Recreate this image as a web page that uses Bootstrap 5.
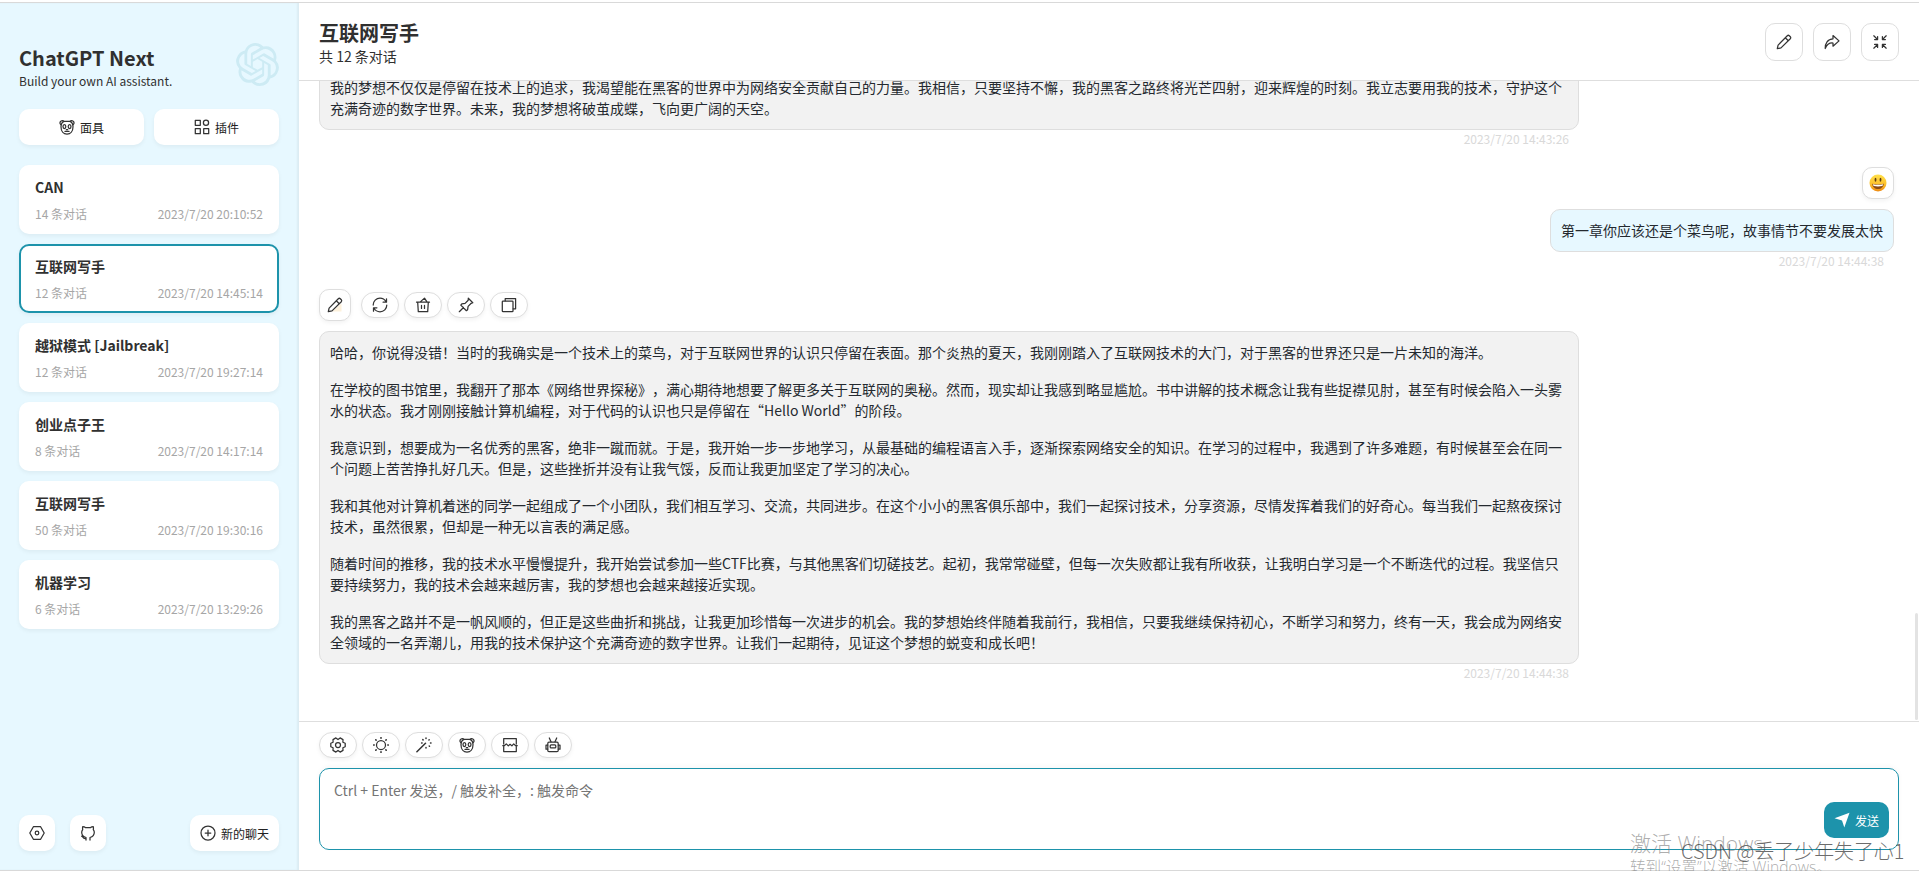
<!DOCTYPE html>
<html lang="zh-CN">
<head>
<meta charset="utf-8">
<meta name="viewport" content="width=device-width, initial-scale=1">
<title>ChatGPT Next</title>
<link href="https://cdn.jsdelivr.net/npm/bootstrap@5.3.0/dist/css/bootstrap.min.css" rel="stylesheet">
<style>
:root{--primary:#1d93ab;--second:#e7f8ff;--line:#dedede;--ink:#303030}
body{font-family:"Noto Sans CJK SC",sans-serif;color:var(--ink);font-size:14px;line-height:21px;background:#fff;text-spacing-trim:space-all}
button{font-family:inherit}
svg{display:block;flex:none}
.ico{width:16px;height:16px;fill:none;stroke:#333;stroke-width:1.25;stroke-linecap:round;stroke-linejoin:round}
.window-shell{border-top:1px solid #d9d9d9;border-bottom:1px solid #d9d9d9;margin-top:2px;height:869px}
.side-panel{width:299px;background:var(--second);box-shadow:inset -2px 0 2px rgba(0,0,0,.05);padding:38px 20px 19px 19px}
.brand{height:68px}
.brand-name{font-size:20px;font-weight:700;line-height:24px;margin-top:5px}
.brand-sub{font-size:12px;line-height:18px;margin-top:2px}
.brand-logo{margin-top:2px}
.tile{height:36px;border:0;border-radius:10px;background:#fff;box-shadow:0 2px 4px rgba(0,0,0,.05);font-size:12px;color:#222;padding:0 10px}
.tile span{margin-left:5px}
.square{width:36px}
.chat-item{height:69px;background:#fff;border:2px solid #fff;border-radius:10px;box-shadow:0 2px 4px rgba(0,0,0,.05);padding:9px 14px 0}
.chat-item.current{border-color:var(--primary)}
.chat-title{font-weight:700;line-height:22px}
.chat-info{font-size:12px;line-height:18px;color:#a6a6a6;margin-top:7px}
.top-bar{height:78px;border-bottom:1px solid var(--line);padding:0 20px}
.top-title{font-size:20px;font-weight:700;line-height:24px;margin-top:4px}
.top-sub{margin-top:1px}
.tool{width:38px;height:38px;border:1px solid var(--line);border-radius:10px;background:#fff}
.chat-body{height:640px;padding:0 25px 38px 20px;position:relative}
.chat-body>*{flex-shrink:0}
.bubble{border:1px solid var(--line);border-radius:10px;padding:10px;color:#24292f}
.bubble p{margin:0 0 16px}
.bubble p:last-child{margin:0}
.from-bot{width:1260px;background:#f2f2f2}
.from-user{background:var(--second)}
.stamp{font-size:12px;line-height:18px;height:19px;color:#d9d9d9;padding-right:10px}
.bot-stamp{width:1260px}
.face{width:32px;height:32px;border:1px solid var(--line);border-radius:10px;background:#fff;box-shadow:0 2px 4px rgba(0,0,0,.05)}
.pill{width:38px;height:26px;border:1px solid var(--line);border-radius:20px;background:#fff;box-shadow:0 2px 4px rgba(0,0,0,.05)}
.scroll-thumb{position:absolute;right:1px;bottom:1px;width:3px;height:107px;border-radius:2px;background:#e3e3e3}
.compose{border-top:1px solid var(--line);padding:10px 20px 19px}
.compose-box{height:82px;margin-top:10px}
.compose-box textarea{display:block;width:100%;height:100%;border:1px solid var(--primary);border-radius:10px;padding:10px 14px;resize:none;outline:0;font:14px/22px "Noto Sans CJK SC",sans-serif;box-shadow:0 -2px 5px rgba(0,0,0,.03)}
textarea::placeholder{color:#757575}
.send{position:absolute;right:10px;bottom:12px;width:65px;height:36px;border:0;border-radius:10px;background:var(--primary);color:#fff;font-size:12px}
.overlay-note{position:absolute;white-space:nowrap;font-weight:300;pointer-events:none}
.note-a,.note-b{font-family:"Open Sans","Noto Sans CJK SC",sans-serif;left:1630px;color:rgba(120,120,120,.62)}
.note-a{top:829px;font-size:21px;line-height:28px}
.note-b{top:856px;font-size:15.6px;line-height:22px}
.note-c{left:1681px;top:837px;font-size:19.9px;line-height:28px;color:rgba(60,60,60,.75)}
</style>
</head>
<body class="overflow-hidden position-relative vh-100">
<svg width="0" height="0" class="position-absolute" aria-hidden="true">
  <symbol id="i-mask" viewBox="0 0 16 16"><path d="M2.2 5.8C.8 5.3.7 3.800 1.400 2.700 2.300 1.300 4.200 1.200 5 2.500M11 2.500c.8-1.300 2.700-1.200 3.600.2.700 1.100.6 2.600-.8 3.100"/><path d="M5 2.300h6c1.800.7 3 2.700 3 5.400 0 4.500-2.500 7.300-6 7.300s-6-2.800-6-7.300c0-2.700 1.200-4.700 3-5.400z"/><ellipse cx="5.400" cy="7.600" rx="1.400" ry="1.900"/><ellipse cx="10.600" cy="7.600" rx="1.400" ry="1.900"/><path d="M7.300 10.600h1.400M6 12.400h4"/></symbol>
  <symbol id="i-grid" viewBox="0 0 16 16"><rect x="1.300" y="1.300" width="5" height="5"/><circle cx="12" cy="3.800" r="2.600"/><rect x="1.300" y="9.700" width="5" height="5"/><rect x="9.700" y="9.700" width="5" height="5"/></symbol>
  <symbol id="i-hex" viewBox="0 0 16 16"><path d="M4.400 1.700h7.200L15.200 8l-3.600 6.300H4.400L.8 8z"/><circle cx="8" cy="8" r="1.800"/></symbol>
  <symbol id="i-git" viewBox="0 0 16 16"><path d="M6 15v-2.500c-3-.8-4.300-2.500-4.300-5.200 0-1.200.4-2 1-2.800-.3-1-.2-2 .1-3 1.100 0 2 .4 2.900 1.200h4.600c.9-.8 1.800-1.200 2.900-1.200.3 1 .4 2 .1 3 .6.800 1 1.600 1 2.800 0 2.700-1.400 4.400-4.300 5.200V15M6 13.500c-2 .3-2.600-.3-3.100-1.200-.3-.6-.7-1-1.300-1.200"/></symbol>
  <symbol id="i-plus" viewBox="0 0 16 16"><circle cx="8" cy="8" r="7"/><path d="M8 5.200v5.600M5.200 8h5.600"/></symbol>
  <symbol id="i-pen" viewBox="0 0 16 16"><path d="M1.300 14.700l.8-3.600L11.300 1.700c.7-.6 1.300-.6 2 0l1 1c.6.700.6 1.300 0 2L5 13.900zM9.300 3.700l3 3M1.300 14.700l3.700-.8"/></symbol>
  <symbol id="i-share" viewBox="0 0 16 16"><path d="M9 1.500l6 5.400-6 5.300V9C5.500 8.700 3 10 1.200 14.500 1 9.300 3.700 5 9 4.800z"/></symbol>
  <symbol id="i-min" viewBox="0 0 16 16"><path d="M1.800 1.800L5.300 5.300M2.600 5.600h3v-3M14.200 1.800l-3.500 3.500M13.400 5.600h-3v-3M1.800 14.200l3.500-3.500M2.600 10.400h3v3M14.200 14.200l-3.500-3.500M13.400 10.400h-3v3"/></symbol>
  <symbol id="i-reload" viewBox="0 0 16 16"><path d="M1.200 8c0-3.800 3-6.800 6.800-6.800 2.600 0 4.800 1.400 6 3.500M14.500 1.800v3.400h-3.400M14.800 8c0 3.800-3 6.800-6.800 6.800-2.600 0-4.800-1.400-6-3.500M1.500 14.200v-3.400h3.400"/></symbol>
  <symbol id="i-bin" viewBox="0 0 16 16"><path d="M2.700 5.200l.6 9.500h9.400l.6-9.500M1.500 5.200h13M5 5.100l4.500-4 2.300 3.600M6.500 8.400v3M9.500 8.400v3"/></symbol>
  <symbol id="i-pin" viewBox="0 0 16 16"><path d="M10.300 1.200l4.500 4.500-1.600.6-3.100 3.100-.5 3.300-1.200 1-5.600-5.600 1-1.200 3.300-.5 3.100-3.100zM5.500 10.500l-4.200 4.200"/></symbol>
  <symbol id="i-copy" viewBox="0 0 16 16"><path d="M4.200 3.800V1.500h10.400v10.300h-2.400"/><rect x="1.300" y="4" width="10.700" height="10.700" rx=".8"/></symbol>
  <symbol id="i-gear" viewBox="0 0 16 16"><path d="M15.200 6.200v3.600L12.900 10.800l.1 2.600-2.900 1.700L8 13.500l-2.100 1.600L3 13.400l.1-2.600L.8 9.800V6.200L3.100 5.200 3 2.600 5.900.9 8 2.500 10.100.9 13 2.600l-.1 2.600z"/><circle cx="8" cy="8" r="2.500"/></symbol>
  <symbol id="i-sun" viewBox="0 0 16 16"><circle cx="8" cy="8" r="4.500"/><path d="M8 .7v.5M8 14.800v.5M.7 8h.5M14.800 8h.5M2.800 2.800l.3.300M12.900 12.900l.3.300M2.800 13.200l.3-.3M12.900 3.100l.3-.3" stroke-width="1.600"/></symbol>
  <symbol id="i-wand" viewBox="0 0 16 16"><path d="M.9 14.800l8.600-8.600" stroke-width="1.500"/><path d="M10 1v.5M10 10.400v.5M5.600 5.900h.5M14.500 5.900h.5M6.800 2.600l.3.300M13.200 9l.3.300M12.900 3l.3-.3" stroke-width="1.500"/></symbol>
  <symbol id="i-break" viewBox="0 0 16 16"><path d="M1.700 7V1.500h12.600V7M1.700 9.500v5h12.600v-5M.8 8.700h1.500L4.300 6.900l2 2 1.800-1.600 1.800 1.600 1.800-2 2 1.800h1.500"/></symbol>
  <symbol id="i-robot" viewBox="0 0 16 16"><path d="M4.300 1l1.700 3.800M11.700 1L10 4.800"/><rect x="2.800" y="5.200" width="10.400" height="9.400" rx="1.200"/><path d="M2.600 8.200H1v4h1.600M13.400 8.200H15v4h-1.600"/><rect x="5.200" y="7.900" width="5.600" height="3" rx="1"/></symbol>
</svg>

<div class="window-shell d-flex">
  <aside class="side-panel d-flex flex-column flex-shrink-0">
    <div class="brand d-flex justify-content-between">
      <div>
        <div class="brand-name">ChatGPT Next</div>
        <div class="brand-sub">Build your own AI assistant.</div>
      </div>
      <svg class="brand-logo" width="43" height="43" viewBox="0 0 24 24" fill="#cdebf4"><path d="M22.2819 9.8211a5.9847 5.9847 0 0 0-.5157-4.9108 6.0462 6.0462 0 0 0-6.5098-2.9A6.0651 6.0651 0 0 0 4.9807 4.1818a5.9847 5.9847 0 0 0-3.9977 2.9 6.0462 6.0462 0 0 0 .7427 7.0966 5.98 5.98 0 0 0 .511 4.9107 6.051 6.051 0 0 0 6.5146 2.9001A5.9847 5.9847 0 0 0 13.2599 24a6.0557 6.0557 0 0 0 5.7718-4.2058 5.9894 5.9894 0 0 0 3.9977-2.9001 6.0557 6.0557 0 0 0-.7475-7.0729zm-9.022 12.6081a4.4755 4.4755 0 0 1-2.8764-1.0408l.1419-.0804 4.7783-2.7582a.7948.7948 0 0 0 .3927-.6813v-6.7369l2.02 1.1686a.071.071 0 0 1 .038.052v5.5826a4.504 4.504 0 0 1-4.4945 4.4944zm-9.6607-4.1254a4.4708 4.4708 0 0 1-.5346-3.0137l.142.0852 4.783 2.7582a.7712.7712 0 0 0 .7806 0l5.8428-3.3685v2.3324a.0804.0804 0 0 1-.0332.0615L9.74 19.9502a4.4992 4.4992 0 0 1-6.1408-1.6464zM2.3408 7.8956a4.485 4.485 0 0 1 2.3655-1.9728V11.6a.7664.7664 0 0 0 .3879.6765l5.8144 3.3543-2.0201 1.1685a.0757.0757 0 0 1-.071 0l-4.8303-2.7865A4.504 4.504 0 0 1 2.3408 7.872zm16.5963 3.8558L13.1038 8.364 15.1192 7.2a.0757.0757 0 0 1 .071 0l4.8303 2.7913a4.4944 4.4944 0 0 1-.6765 8.1042v-5.6772a.79.79 0 0 0-.407-.667zm2.0107-3.0231l-.142-.0852-4.7735-2.7818a.7759.7759 0 0 0-.7854 0L9.409 9.2297V6.8974a.0662.0662 0 0 1 .0284-.0615l4.8303-2.7866a4.4992 4.4992 0 0 1 6.6802 4.66zM8.3065 12.863l-2.02-1.1638a.0804.0804 0 0 1-.038-.0567V6.0742a4.4992 4.4992 0 0 1 7.3757-3.4537l-.142.0805L8.704 5.459a.7948.7948 0 0 0-.3927.6813zm1.0976-2.3654l2.602-1.4998 2.6069 1.4998v2.9994l-2.5974 1.4997-2.6067-1.4997Z"/></svg>
    </div>
    <div class="d-flex" style="gap:10px">
      <button class="tile flex-fill d-flex align-items-center justify-content-center"><svg class="ico"><use href="#i-mask"/></svg><span>面具</span></button>
      <button class="tile flex-fill d-flex align-items-center justify-content-center"><svg class="ico"><use href="#i-grid"/></svg><span>插件</span></button>
    </div>
    <div class="d-flex flex-column flex-grow-1" style="gap:10px;margin-top:20px">
      <div class="chat-item"><div class="chat-title">CAN</div><div class="chat-info d-flex justify-content-between"><span>14 条对话</span><span>2023/7/20 20:10:52</span></div></div>
      <div class="chat-item current"><div class="chat-title">互联网写手</div><div class="chat-info d-flex justify-content-between"><span>12 条对话</span><span>2023/7/20 14:45:14</span></div></div>
      <div class="chat-item"><div class="chat-title">越狱模式 [Jailbreak]</div><div class="chat-info d-flex justify-content-between"><span>12 条对话</span><span>2023/7/20 19:27:14</span></div></div>
      <div class="chat-item"><div class="chat-title">创业点子王</div><div class="chat-info d-flex justify-content-between"><span>8 条对话</span><span>2023/7/20 14:17:14</span></div></div>
      <div class="chat-item"><div class="chat-title">互联网写手</div><div class="chat-info d-flex justify-content-between"><span>50 条对话</span><span>2023/7/20 19:30:16</span></div></div>
      <div class="chat-item"><div class="chat-title">机器学习</div><div class="chat-info d-flex justify-content-between"><span>6 条对话</span><span>2023/7/20 13:29:26</span></div></div>
    </div>
    <div class="d-flex align-items-center">
      <button class="tile square" aria-label="设置"><svg class="ico"><use href="#i-hex"/></svg></button>
      <button class="tile square" style="margin-left:15px" aria-label="GitHub"><svg class="ico"><use href="#i-git"/></svg></button>
      <button class="tile ms-auto d-flex align-items-center"><svg class="ico"><use href="#i-plus"/></svg><span>新的聊天</span></button>
    </div>
  </aside>

  <main class="flex-grow-1 d-flex flex-column">
    <header class="top-bar d-flex align-items-center justify-content-between">
      <div>
        <div class="top-title">互联网写手</div>
        <div class="top-sub">共 12 条对话</div>
      </div>
      <div class="d-flex" style="gap:10px">
        <button class="tool d-flex align-items-center justify-content-center" aria-label="编辑"><svg class="ico"><use href="#i-pen"/></svg></button>
        <button class="tool d-flex align-items-center justify-content-center" aria-label="分享"><svg class="ico"><use href="#i-share"/></svg></button>
        <button class="tool d-flex align-items-center justify-content-center" aria-label="缩小"><svg class="ico"><use href="#i-min"/></svg></button>
      </div>
    </header>

    <section class="chat-body d-flex flex-column justify-content-end overflow-hidden">
      <div class="bubble from-bot"><p>我的梦想不仅仅是停留在技术上的追求，我渴望能在黑客的世界中为网络安全贡献自己的力量。我相信，只要坚持不懈，我的黑客之路终将光芒四射，迎来辉煌的时刻。我立志要用我的技术，守护这个充满奇迹的数字世界。未来，我的梦想将破茧成蝶，飞向更广阔的天空。</p></div>
      <div class="stamp bot-stamp text-end">2023/7/20 14:43:26</div>

      <div class="d-flex flex-column align-items-end" style="margin-top:18px">
        <div class="face d-flex align-items-center justify-content-center">
          <svg width="18" height="18" viewBox="0 0 18 18"><defs><linearGradient id="sun" x1="0" y1="0" x2="0" y2="1"><stop offset="0" stop-color="#ffe04a"/><stop offset=".55" stop-color="#fdc22d"/><stop offset="1" stop-color="#ee8a12"/></linearGradient></defs><circle cx="9" cy="9" r="8.500" fill="url(#sun)"/><ellipse cx="6.500" cy="5.800" rx=".9" ry="2" fill="#5f3b12"/><ellipse cx="11.500" cy="5.800" rx=".9" ry="2" fill="#5f3b12"/><path d="M3.200 9.700c3.600.9 8 .9 11.600 0-.3 3.200-2.600 5.300-5.800 5.300s-5.500-2.100-5.800-5.300z" fill="#8a4a14"/><path d="M3.900 10.200c3.300.7 6.900.7 10.200 0-.1 1-.5 1.500-1 1.800-2.700.5-5.500.5-8.200 0-.5-.3-.9-.8-1-1.800z" fill="#fff"/></svg>
        </div>
        <div class="bubble from-user" style="margin-top:10px">第一章你应该还是个菜鸟呢，故事情节不要发展太快</div>
        <div class="stamp">2023/7/20 14:44:38</div>
      </div>

      <div class="d-flex align-items-center" style="gap:5px;margin:18px 0 10px">
        <div class="face d-flex align-items-center justify-content-center" style="margin-right:5px"><svg width="16" height="16" viewBox="0 0 16 16"><path d="M5 14.500L14.500 6.500V14.500z" fill="#fdf1dc"/><use href="#i-pen" class="ico"/></svg></div>
        <button class="pill d-flex align-items-center justify-content-center" aria-label="重试"><svg class="ico"><use href="#i-reload"/></svg></button>
        <button class="pill d-flex align-items-center justify-content-center" aria-label="删除"><svg class="ico"><use href="#i-bin"/></svg></button>
        <button class="pill d-flex align-items-center justify-content-center" aria-label="固定"><svg class="ico"><use href="#i-pin"/></svg></button>
        <button class="pill d-flex align-items-center justify-content-center" aria-label="复制"><svg class="ico"><use href="#i-copy"/></svg></button>
      </div>
      <div class="bubble from-bot">
        <p>哈哈，你说得没错！当时的我确实是一个技术上的菜鸟，对于互联网世界的认识只停留在表面。那个炎热的夏天，我刚刚踏入了互联网技术的大门，对于黑客的世界还只是一片未知的海洋。</p>
        <p>在学校的图书馆里，我翻开了那本《网络世界探秘》<span>，</span>满心期待地想要了解更多关于互联网的奥秘。然而，现实却让我感到略显尴尬。书中讲解的技术概念让我有些捉襟见肘，甚至有时候会陷入一头雾水的状态。我才刚刚接触计算机编程，对于代码的认识也只是停留在“Hello World”的阶段。</p>
        <p>我意识到，想要成为一名优秀的黑客，绝非一蹴而就。于是，我开始一步一步地学习，从最基础的编程语言入手，逐渐探索网络安全的知识。在学习的过程中，我遇到了许多难题，有时候甚至会在同一个问题上苦苦挣扎好几天。但是，这些挫折并没有让我气馁，反而让我更加坚定了学习的决心。</p>
        <p>我和其他对计算机着迷的同学一起组成了一个小团队，我们相互学习、交流，共同进步。在这个小小的黑客俱乐部中，我们一起探讨技术，分享资源，尽情发挥着我们的好奇心。每当我们一起熬夜探讨技术，虽然很累，但却是一种无以言表的满足感。</p>
        <p>随着时间的推移，我的技术水平慢慢提升，我开始尝试参加一些CTF比赛，与其他黑客们切磋技艺。起初，我常常碰壁，但每一次失败都让我有所收获，让我明白学习是一个不断迭代的过程。我坚信只要持续努力，我的技术会越来越厉害，我的梦想也会越来越接近实现。</p>
        <p>我的黑客之路并不是一帆风顺的，但正是这些曲折和挑战，让我更加珍惜每一次进步的机会。我的梦想始终伴随着我前行，我相信，只要我继续保持初心，不断学习和努力，终有一天，我会成为网络安全领域的一名弄潮儿，用我的技术保护这个充满奇迹的数字世界。让我们一起期待，见证这个梦想的蜕变和成长吧！</p>
      </div>
      <div class="stamp bot-stamp text-end">2023/7/20 14:44:38</div>
      <div class="scroll-thumb"></div>
    </section>

    <footer class="compose">
      <div class="d-flex" style="gap:5px">
        <button class="pill d-flex align-items-center justify-content-center" aria-label="对话设置"><svg class="ico"><use href="#i-gear"/></svg></button>
        <button class="pill d-flex align-items-center justify-content-center" aria-label="主题"><svg class="ico"><use href="#i-sun"/></svg></button>
        <button class="pill d-flex align-items-center justify-content-center" aria-label="快捷指令"><svg class="ico"><use href="#i-wand"/></svg></button>
        <button class="pill d-flex align-items-center justify-content-center" aria-label="所有面具"><svg class="ico"><use href="#i-mask"/></svg></button>
        <button class="pill d-flex align-items-center justify-content-center" aria-label="清除聊天"><svg class="ico"><use href="#i-break"/></svg></button>
        <button class="pill d-flex align-items-center justify-content-center" aria-label="模型"><svg class="ico"><use href="#i-robot"/></svg></button>
      </div>
      <div class="compose-box position-relative">
        <textarea placeholder="Ctrl + Enter 发送，/ 触发补全，: 触发命令"></textarea>
        <button class="send d-flex align-items-center justify-content-center"><svg width="16" height="16" viewBox="0 0 16 16" fill="#fff"><path d="M15.500.8L10.300 15.500 8 8.600.5 6.300z"/></svg><span style="margin-left:5px">发送</span></button>
      </div>
    </footer>
  </main>
</div>

<div class="overlay-note note-a">激活 Windows</div>
<div class="overlay-note note-b">转到“设置”以激活 Windows。</div>
<div class="overlay-note note-c">CSDN @丢了少年失了心1</div>
<script src="https://cdn.jsdelivr.net/npm/bootstrap@5.3.0/dist/js/bootstrap.bundle.min.js"></script>
</body>
</html>
